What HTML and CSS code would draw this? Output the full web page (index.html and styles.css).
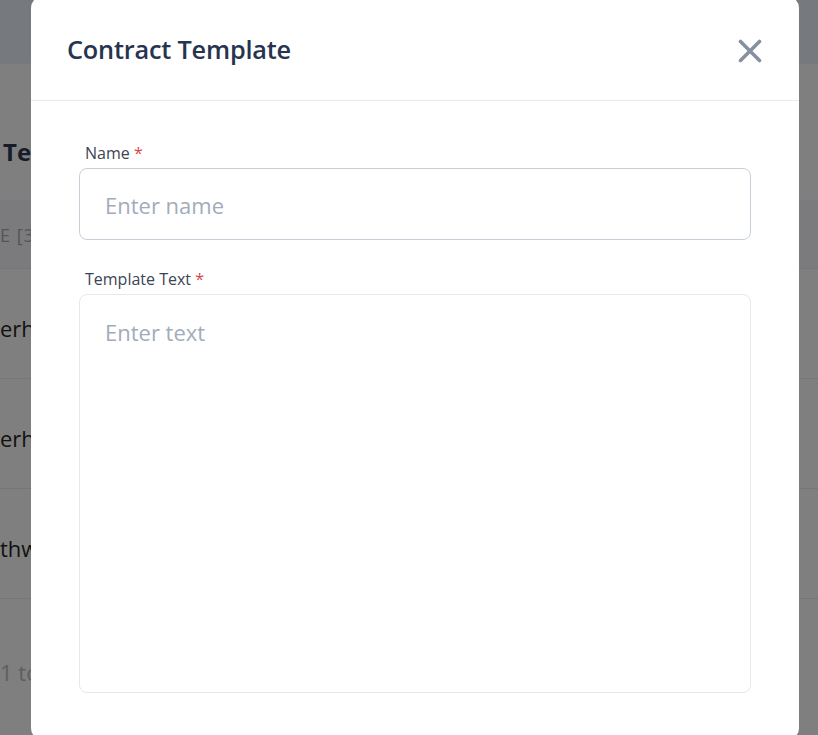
FILE: index.html
```html
<!DOCTYPE html>
<html>
<head>
<meta charset="utf-8">
<link rel="stylesheet" href="styles.css">
</head>
<body>
<div class="page">
  <div class="topbar"></div>
  <div class="title-row"><span class="page-title">Tem</span></div>
  <div class="thead"><span>E [3]</span></div>
  <div class="row"><span>erhwerh</span></div>
  <div class="row"><span>erhwerh</span></div>
  <div class="row"><span>thwrthw</span></div>
  <div class="footer"><span>1 to 3 of 3</span></div>
</div>
<div class="overlay">
  <div class="modal">
    <div class="modal-header">
      <h2 class="modal-title">Contract Template</h2>
      <button class="close" aria-label="Close">
        <svg width="24" height="24" viewBox="0 0 24 24"><path d="M2.5 2.5 L21.5 21.5 M21.5 2.5 L2.5 21.5" stroke="#8790a0" stroke-width="3.6" stroke-linecap="round"/></svg>
      </button>
    </div>
    <div class="modal-body">
      <label class="label">Name <span class="req">*</span></label>
      <div class="input">Enter name</div>
      <label class="label label2">Template Text <span class="req">*</span></label>
      <div class="textarea">Enter text</div>
    </div>
  </div>
</div>
</body>
</html>
```
FILE: styles.css
```css
html, body {
  margin: 0;
  padding: 0;
  width: 818px;
  height: 735px;
  overflow: hidden;
  font-family: "Open Sans", "Noto Sans", sans-serif;
}
body { position: relative; background: #7f7f7f; }

.page { display: flex; flex-direction: column; }
.topbar { height: 63px; background: #76797d; border-bottom: 1px solid #7a7a7a; }
.title-row { height: 136px; box-sizing: border-box; padding: 72px 0 0 3px; }
.page-title { display: block; font-size: 24px; line-height: 32px; font-weight: 700; color: #161c28; }
.thead { height: 68px; background: #7b7b7d; display: flex; align-items: center; border-bottom: 1px solid #767676; }
.thead span { font-size: 18px; color: #555; letter-spacing: 1px; margin-top: 2px; }
.row { height: 110px; box-sizing: border-box; display: flex; align-items: center; border-bottom: 1px solid #767676; padding-top: 8px; }
.row span { font-size: 22px; color: #111; }
.footer { height: 150px; display: flex; align-items: center; }
.footer span { font-size: 22px; color: #5e5e5e; margin-top: -4px; }

.overlay { position: absolute; inset: 0; }
.modal {
  position: absolute;
  left: 31px; top: -4px;
  width: 768px; height: 744px;
  background: #fff;
  border-radius: 12px;
  display: flex; flex-direction: column;
}
.modal-header {
  height: 105px;
  box-sizing: border-box;
  border-bottom: 1px solid #e8ebee;
  display: flex; align-items: center; justify-content: space-between;
  padding: 0 36px 0 36px;
}
.modal-title { margin: 0; font-size: 25.3px; font-weight: 600; color: #26344f; letter-spacing: -0.2px; margin-top: 2px; }
.close { background: none; border: 0; padding: 0; width: 24px; height: 24px; display: flex; cursor: pointer; margin-top: 6px; margin-right: 1px; }

.modal-body { padding: 41px 48px 0 48px; display: flex; flex-direction: column; }
.label { font-size: 16px; color: #3d4452; margin-left: 6px; line-height: 22px; height: 22px; }
.req { color: #d9454a; }
.input {
  margin-top: 4px;
  height: 72px; box-sizing: border-box;
  border: 1px solid #c7d0d9; border-radius: 8px;
  padding: 2px 25px 0; display: flex; align-items: center;
  font-size: 22px; color: #a2acb9;
}
.label2 { margin-top: 28px; }
.textarea {
  margin-top: 4px;
  height: 399px; box-sizing: border-box;
  border: 1px solid #e6e8eb; border-radius: 8px;
  padding: 22px 25px; font-size: 22px; color: #a2acb9; line-height: 30px;
}
```
